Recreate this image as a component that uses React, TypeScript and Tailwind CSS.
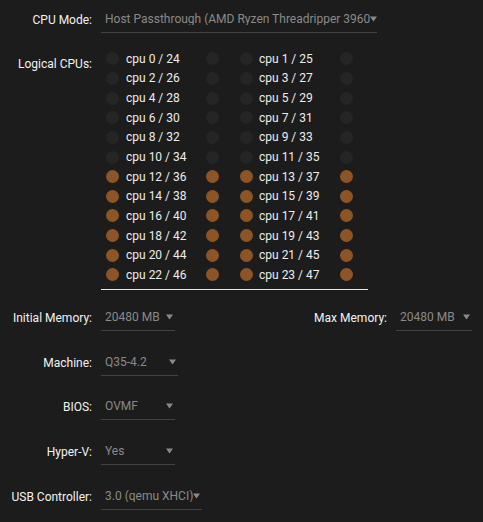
import React from "react";

const Arrow = () => (
  <svg width="7" height="6" viewBox="0 0 7 6" className="shrink-0">
    <path d="M0 0.5 H7 L3.5 5.5 Z" fill="#8a8a8a" />
  </svg>
);

function Select({ value, width }: { value: string; width: number }) {
  return (
    <div
      className="flex items-center h-[26px] border-b border-[#424242] pl-[4px] pr-[2px] overflow-hidden shrink-0"
      style={{ width }}
    >
      <span className="text-[#8a8a8a] whitespace-nowrap overflow-hidden flex-1 min-w-0">{value}</span>
      <Arrow />
    </div>
  );
}

function Label({ children }: { children: React.ReactNode }) {
  return <div className="w-[92px] text-right text-[#f2f2f2] whitespace-nowrap shrink-0">{children}</div>;
}

const ON = "#8d5526";
const OFF = "#252525";

function Dot({ on }: { on: boolean }) {
  return <div className="w-[13px] h-[13px] rounded-full shrink-0" style={{ background: on ? ON : OFF }} />;
}

export default function App() {
  const rows = Array.from({ length: 12 }, (_, i) => i);
  return (
    <div className="w-[483px] h-[522px] bg-[#1c1c1c] font-['Roboto',sans-serif] text-[12px] leading-none overflow-hidden">
      {/* CPU Mode */}
      <div className="flex items-center gap-[9px] pt-[6px]">
        <Label>CPU Mode:</Label>
        <div className="flex items-center h-[27px] border-b border-[#424242] pl-[4px] w-[276px]">
          <span className="text-[#8a8a8a] whitespace-nowrap overflow-hidden w-[266px]">
            Host Passthrough (AMD Ryzen Threadripper 3960X)
          </span>
          <Arrow />
        </div>
      </div>

      {/* Logical CPUs */}
      <div className="flex gap-[9px] mt-[16px]">
        <div className="w-[92px] text-right text-[#f2f2f2] pt-[9px]">Logical CPUs:</div>
        <div className="flex flex-col">
          <div className="flex flex-col pl-[5px]">
            {rows.map((r) => {
              const on = r >= 6;
              return (
                <div key={r} className="flex items-center h-[19.65px]">
                  <div className="flex items-center w-[134px]">
                    <Dot on={on} />
                    <span className="ml-[7px] w-[80px] text-[#ececec] whitespace-nowrap">
                      cpu {r * 2} / {r * 2 + 24}
                    </span>
                    <Dot on={on} />
                  </div>
                  <div className="flex items-center">
                    <Dot on={on} />
                    <span className="ml-[6px] w-[81px] text-[#ececec] whitespace-nowrap">
                      cpu {r * 2 + 1} / {r * 2 + 25}
                    </span>
                    <Dot on={on} />
                  </div>
                </div>
              );
            })}
          </div>
          <div className="mt-[4px] h-px w-[267px] bg-[#e6e6e6]" />
        </div>
      </div>

      {/* Memory */}
      <div className="flex items-center justify-between w-[472px] mt-[15px]">
        <div className="flex items-center gap-[9px]">
          <Label>Initial Memory:</Label>
          <Select value="20480 MB" width={74} />
        </div>
        <div className="flex items-center gap-[9px]">
          <span className="text-[#f2f2f2] whitespace-nowrap">Max Memory:</span>
          <Select value="20480 MB" width={76} />
        </div>
      </div>

      <div className="flex items-center gap-[9px] mt-[19px]">
        <Label>Machine:</Label>
        <Select value="Q35-4.2" width={77} />
      </div>

      <div className="flex items-center gap-[9px] mt-[18px]">
        <Label>BIOS:</Label>
        <Select value="OVMF" width={74} />
      </div>

      <div className="flex items-center gap-[9px] mt-[19px]">
        <Label>Hyper-V:</Label>
        <Select value="Yes" width={74} />
      </div>

      <div className="flex items-center gap-[9px] mt-[19px]">
        <Label>USB Controller:</Label>
        <Select value="3.0 (qemu XHCI)" width={101} />
      </div>
    </div>
  );
}
